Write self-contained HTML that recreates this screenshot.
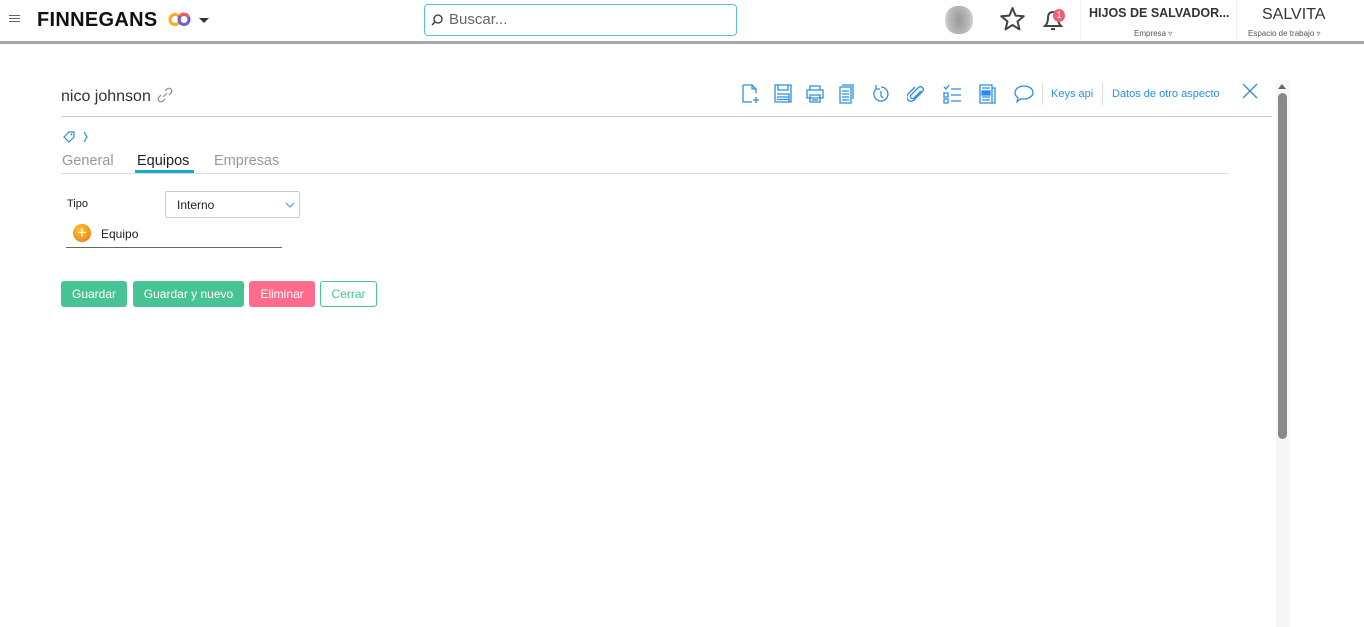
<!DOCTYPE html>
<html><head><meta charset="utf-8"><style>
*{box-sizing:border-box;margin:0;padding:0}
body{width:1364px;height:627px;overflow:hidden;background:#fff;font-family:"Liberation Sans",sans-serif;position:relative}
.abs{position:absolute}
.top{position:absolute;left:0;top:0;width:1364px;height:44px;background:#fff;border-bottom:3px solid #a7a7ad}
.btn{position:absolute;top:281px;height:26px;border-radius:3px;font-size:12px;color:#fff;text-align:center;line-height:26px}
svg.i{position:absolute;top:84px}
svg.i *{fill:none;stroke:#2b8fe0;stroke-width:1.3}
</style></head><body>
<div class="top">
 <div class="abs" style="left:9px;top:15px;width:11px;height:1px;background:#666;box-shadow:0 3px 0 #666,0 6px 0 #666"></div>
 <div class="abs" style="left:37px;top:9px;font-size:20px;font-weight:bold;color:#111;letter-spacing:0.3px">FINNEGANS</div>
 <svg class="abs" style="left:167px;top:11px" width="26" height="17"><circle cx="8" cy="8.5" r="5" fill="none" stroke="#fbab1c" stroke-width="3"/><circle cx="17" cy="8.5" r="5" fill="none" stroke="#6a5fd4" stroke-width="3"/><path d="M13 5 A5 5 0 0 1 21.5 6" fill="none" stroke="#ef5a6a" stroke-width="3"/></svg>
 <div class="abs" style="left:199px;top:18px;border:5px solid transparent;border-top:5px solid #333"></div>
 <div class="abs" style="left:424px;top:4px;width:313px;height:32px;border:1px solid #5bc0de;border-radius:4px"></div>
 <svg class="abs" style="left:430px;top:13px" width="14" height="14"><circle cx="8" cy="6" r="4" fill="none" stroke="#333" stroke-width="1.3"/><path d="M5 9 L2 12" stroke="#333" stroke-width="1.3"/></svg>
 <div class="abs" style="left:449px;top:11px;font-size:15px;color:#666">Buscar...</div>
 <div class="abs" style="left:945px;top:6px;width:28px;height:28px;border-radius:45%;background:radial-gradient(ellipse 60% 100%,#999,#bbb 60%,#e8e8e8)"></div>
 <svg class="abs" style="left:999px;top:6px" width="27" height="26"><path d="M13.5 2 L16.6 9.6 L24.8 10.2 L18.5 15.4 L20.5 23.4 L13.5 19 L6.5 23.4 L8.5 15.4 L2.2 10.2 L10.4 9.6 Z" fill="none" stroke="#444" stroke-width="2" stroke-linejoin="round"/></svg>
 <svg class="abs" style="left:1042px;top:9px" width="22" height="24"><path d="M3 17 Q6 14 6 9 Q6 3 11 3 Q16 3 16 9 Q16 14 19 17 Z" fill="none" stroke="#444" stroke-width="2"/><path d="M9 20 h4" stroke="#444" stroke-width="2"/></svg>
 <div class="abs" style="left:1053px;top:9px;width:12px;height:13px;border-radius:50%;background:#f06170;color:#fff;font-size:9px;text-align:center;line-height:13px">1</div>
 <div class="abs" style="left:1080px;top:0;width:1px;height:41px;background:#eee"></div>
 <div class="abs" style="left:1089px;top:6px;font-size:12.5px;font-weight:bold;color:#333">HIJOS DE SALVADOR...</div>
 <div class="abs" style="left:1134px;top:29px;font-size:8px;color:#555">Empresa ▿</div>
 <div class="abs" style="left:1236px;top:0;width:1px;height:41px;background:#eee"></div>
 <div class="abs" style="left:1262px;top:6px;font-size:16px;color:#333">SALVITA</div>
 <div class="abs" style="left:1248px;top:29px;font-size:8px;color:#555">Espacio de trabajo ▿</div>
</div>
<div class="abs" style="left:61px;top:88px;font-size:16px;color:#333">nico johnson</div>
<svg class="abs" style="left:157px;top:87px" width="16" height="16"><path d="M6 10 L10 6 M8 4 l2-2 a2.5 2.5 0 0 1 4 4 l-2 2 M8 12 l-2 2 a2.5 2.5 0 0 1 -4 -4 l2 -2" fill="none" stroke="#888" stroke-width="1.2"/></svg>
<div class="abs" style="left:61px;top:116px;width:1211px;height:1px;background:#ccc"></div>
<svg class="i" style="left:741px" width="18" height="20"><path d="M2 1 h9 l4 4 v4 M2 1 v17 h9 M11 1 v4 h4 M15 13 v6 M12 16 h6"/></svg>
<svg class="i" style="left:774px" width="18" height="20"><path d="M1 1 h16 v17 h-16 z M4 1 v5 h10 v-5 M3 10 h12 v8 M3 13 h12 M3 15.5 h12"/></svg>
<svg class="i" style="left:806px" width="18" height="20"><path d="M4 6 v-4 h10 v4 M1 6 h16 v8 h-16 z M4 11 h10 v7 h-10 z M6 14 h6 M6 16 h6"/></svg>
<svg class="i" style="left:839px" width="16" height="20"><path d="M3 1 h11 v14 M1 3 h11 v16 h-11 z M3 7 h7 M3 10 h7 M3 13 h7 M3 16 h7"/></svg>
<svg class="i" style="left:871px" width="18" height="20"><path d="M5 5 a7 7 0 1 0 5 -2 M5 1 v4 h4 M10 7 v5 l2 2"/></svg>
<svg class="i" style="left:907px" width="18" height="20"><path d="M14 7 l-7 7 a2 2 0 0 1 -3 -3 l8 -8 a3 3 0 0 1 4 4 l-9 9 a4 4 0 0 1 -6 -6 l7 -7"/></svg>
<svg class="i" style="left:943px" width="18" height="20"><path d="M1 3 l2 2 l3 -4 M1 9 h4 v4 h-4 z M1 15 h4 v4 h-4 z M8 5 h10 M8 11 h10 M8 17 h10"/></svg>
<svg class="i" style="left:979px" width="18" height="20"><path d="M1 1 h12 v18 h-12 z M13 4 h3 v15 h-3 M3 4 h8 M3 7 h8 M3 10 h8 M3 13 h8 M3 16 h8"/><rect x="3" y="7" width="8" height="4" style="fill:#2b8fe0"/></svg>
<svg class="i" style="left:1014px" width="20" height="20"><path d="M10 2 c5 0 9 3 9 6.5 s-4 6.5 -9 6.5 c-1 0 -2 0 -3 -0.3 l-4 3 l1 -4 c-2 -1.3 -3 -3 -3 -5.2 c0 -3.5 4 -6.5 9 -6.5 z"/></svg>
<div class="abs" style="left:1042px;top:83px;width:1px;height:22px;background:#ddd"></div>
<div class="abs" style="left:1051px;top:88px;font-size:11px;color:#2b8fe0">Keys api</div>
<div class="abs" style="left:1102px;top:83px;width:1px;height:22px;background:#ddd"></div>
<div class="abs" style="left:1112px;top:88px;font-size:11px;color:#2b8fe0">Datos de otro aspecto</div>
<svg class="abs" style="left:1242px;top:83px" width="16" height="16"><path d="M1 1 L15 15 M15 1 L1 15" stroke="#2b8fe0" stroke-width="1.3"/></svg>
<div class="abs" style="left:1276px;top:80px;width:14px;height:547px;background:#f7f7f7"></div>
<div class="abs" style="left:1278px;top:80px;border:4px solid transparent;border-bottom:5px solid #666;width:0"></div>
<div class="abs" style="left:1278px;top:93px;width:9px;height:346px;border-radius:5px;background:#888"></div>
<svg class="abs" style="left:63px;top:130px" width="30" height="14"><path d="M1 7 l5 -5 h5 v5 l-5 5 z" fill="none" stroke="#2b8fe0" stroke-width="1.2"/><circle cx="8.5" cy="4.5" r="1" fill="#2b8fe0"/><path d="M21 2 l3 5 l-3 5" fill="none" stroke="#2b8fe0" stroke-width="1.2"/></svg>
<div class="abs" style="left:62px;top:153px;font-size:14.5px;color:#999">General</div>
<div class="abs" style="left:137px;top:153px;font-size:14.5px;color:#222">Equipos</div>
<div class="abs" style="left:135px;top:170px;width:59px;height:3px;background:#17a9cc"></div>
<div class="abs" style="left:214px;top:153px;font-size:14.5px;color:#999">Empresas</div>
<div class="abs" style="left:61px;top:173px;width:1167px;height:1px;background:#ddd"></div>
<div class="abs" style="left:67px;top:198px;font-size:11px;color:#222">Tipo</div>
<div class="abs" style="left:165px;top:191px;width:135px;height:27px;border:1px solid #ccc;border-radius:2px;font-size:12px;color:#222;padding:6px 11px">Interno</div>
<svg class="abs" style="left:285px;top:202px" width="10" height="7"><path d="M1 1 l4 4 l4 -4" fill="none" stroke="#5a9bd5" stroke-width="1.2"/></svg>
<div class="abs" style="left:73px;top:224px;width:18px;height:18px;border-radius:50%;background:radial-gradient(circle at 40% 35%,#ffc52c,#f7931e 60%,#f25c1e);color:#fff;font-size:17px;line-height:17px;text-align:center">+</div>
<div class="abs" style="left:101px;top:227px;font-size:12px;color:#222">Equipo</div>
<div class="abs" style="left:66px;top:247px;width:216px;height:1px;background:#666"></div>
<div class="btn" style="left:61px;width:66px;background:#48c393">Guardar</div>
<div class="btn" style="left:133px;width:111px;background:#48c393">Guardar y nuevo</div>
<div class="btn" style="left:249px;width:66px;background:#ff6b8d">Eliminar</div>
<div class="btn" style="left:320px;width:57px;background:#fff;border:1px solid #48c393;color:#48c393;line-height:24px">Cerrar</div>
</body></html>
